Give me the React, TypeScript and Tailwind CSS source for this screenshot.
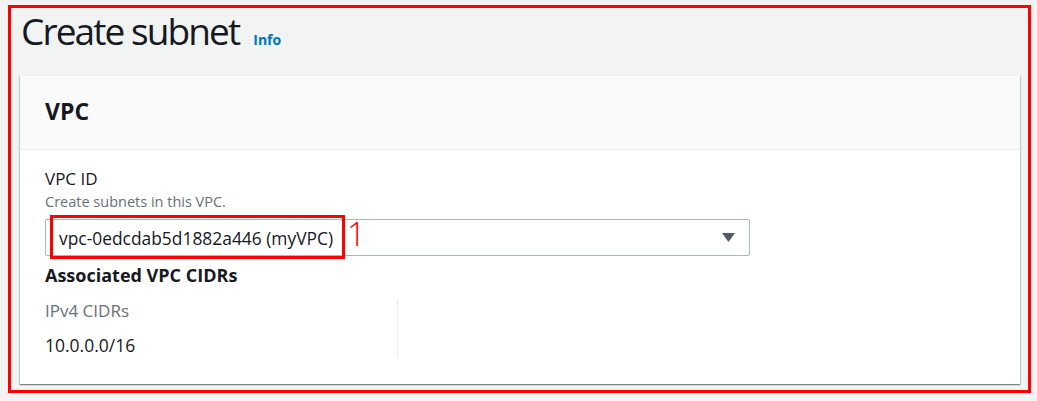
export default function App() {
  return (
    <div className="w-[1037px] h-[401px] bg-[#f2f3f3] pt-[5px] pl-[8px] font-['Open_Sans',sans-serif] text-[#16191f]">
      <div className="w-[1023px] h-[388px] border-[3px] border-[#ff0000] pl-[9px] pr-[8px]">
        <div className="flex items-baseline gap-[14px] h-[67px] pt-[1px] pl-[1px]">
          <h1 className="text-[37px] leading-[44px] font-normal tracking-[-1.9px]">Create subnet</h1>
          <a className="text-[14px] font-bold text-[#0073bb]">Info</a>
        </div>
        <div className="bg-white shadow-[0_1px_1px_0_rgba(0,28,36,0.3),1px_1px_1px_0_rgba(0,28,36,0.15),-1px_1px_1px_0_rgba(0,28,36,0.15)] border-t border-[#eaeded]">
          <div className="bg-[#fafafa] h-[74px] border-b border-[#eaeded] pt-[20px] px-[25px]">
            <h2 className="text-[23px] leading-[30px] font-bold">VPC</h2>
          </div>
          <div className="px-[25px] pt-[18px] pb-[26px]">
            <div className="text-[17px] leading-[22px]">VPC ID</div>
            <div className="mt-[3px] text-[14.5px] leading-[18px] text-[#687078]">Create subnets in this VPC.</div>
            <div className="relative mt-[8px] w-[705px] h-[37px] border border-[#aab7b8] rounded-[2px] flex items-center pl-[13px] pr-[14px]">
              <span className="text-[17.4px] leading-[24px]">vpc-0edcdab5d1882a446 (myVPC)</span>
              <svg className="ml-auto" width="13" height="9" viewBox="0 0 13 9">
                <path d="M0 0H13L6.5 9Z" fill="#545b64" />
              </svg>
              <div className="absolute left-[4px] top-[-5px] w-[295px] h-[44px] border-[3px] border-[#ff0000]" />
              <span className="absolute left-[301px] top-[-3px] text-[33px] leading-[33px] text-[#ff0000] font-light">1</span>
            </div>
            <div className="mt-[7px] text-[18px] font-bold leading-[24px]">Associated VPC CIDRs</div>
            <div className="mt-[13px] flex">
              <div className="w-[353px] border-r border-[#eaeded] pb-[2px]">
                <div className="text-[17px] leading-[22px] text-[#687078]">IPv4 CIDRs</div>
                <div className="mt-[12px] text-[17.5px] leading-[22px]">10.0.0.0/16</div>
              </div>
            </div>
          </div>
        </div>
      </div>
    </div>
  );
}
